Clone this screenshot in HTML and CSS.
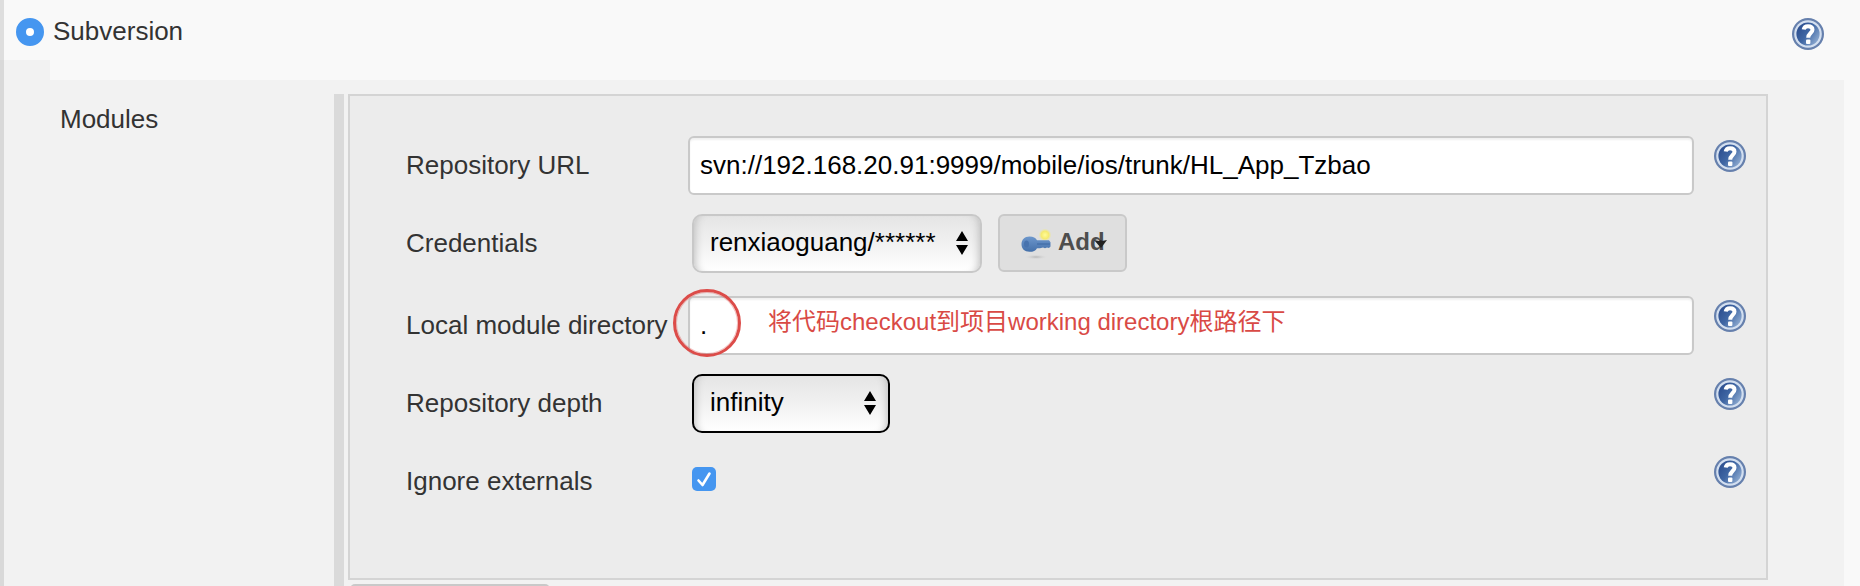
FILE: index.html
```html
<!DOCTYPE html>
<html lang="en">
<head>
<meta charset="utf-8">
<title>Subversion</title>
<link rel="stylesheet" href="styles.css">
</head>
<body>
<svg class="defs" width="0" height="0" aria-hidden="true">
  <defs>
    <linearGradient id="ball" x1="0" y1="0.2" x2="1" y2="0.9"><stop offset="0" stop-color="#2b4d8e"/><stop offset="0.45" stop-color="#4067a4"/><stop offset="1" stop-color="#9bb6d8"/></linearGradient>
    <linearGradient id="keyfill" x1="0" y1="0" x2="0" y2="1"><stop offset="0" stop-color="#6d97cc"/><stop offset="1" stop-color="#4470aa"/></linearGradient>
    <radialGradient id="glow"><stop offset="0" stop-color="#fffb9a"/><stop offset="0.6" stop-color="#f5ea6e"/><stop offset="1" stop-color="#eee9a0" stop-opacity="0"/></radialGradient>
    <radialGradient id="shade"><stop offset="0" stop-color="#b5b5b5"/><stop offset="1" stop-color="#dfdfdf" stop-opacity="0"/></radialGradient>
    <symbol id="help" viewBox="0 0 32 32">
      <circle cx="16" cy="16" r="16" fill="#6680ad"/>
      <circle cx="16" cy="16" r="13.800" fill="#d3dff0"/>
      <circle cx="16" cy="16" r="11.600" fill="url(#ball)"/>
      <path d="M11.700 11.600c.3-2.300 2-3.400 4.300-3.400 2.800 0 4.500 1.300 4.500 3.500 0 3.300-4.300 3.500-4.300 8.100" fill="none" stroke="#fff" stroke-width="4"/>
      <rect x="14" y="21.600" width="4.400" height="4.400" rx="1" fill="#fff"/>
    </symbol>
    <symbol id="updown" viewBox="0 0 12 24"><path d="M6 0l6 10H0zM6 24l6-10H0z"/></symbol>
  </defs>
</svg>
<main class="page">
  <header class="scm">
    <span class="radio"></span>
    <span class="scm-name">Subversion</span>
    <svg class="help scm-help"><use href="#help"/></svg>
  </header>
  <section class="body">
    <div class="section-name">Modules</div>
    <div class="rail"></div>
    <div class="stack">
      <div class="panel">
        <div class="label">Repository URL</div>
        <div class="input">svn://192.168.20.91:9999/mobile/ios/trunk/HL_App_Tzbao</div>
        <svg class="help"><use href="#help"/></svg>

        <div class="label">Credentials</div>
        <div class="controls">
          <div class="select cred">renxiaoguang/******<svg class="updown"><use href="#updown"/></svg></div>
          <div class="add">
            <svg class="key" viewBox="0 0 32 32">
              <ellipse cx="16" cy="28" rx="12" ry="2.500" fill="url(#shade)"/>
              <circle cx="25" cy="6" r="6.500" fill="url(#glow)"/>
              <path d="M9.500 7.500c4 0 6 1.200 7.500 3.800h12l1.500 2v4.200l-1.500 1.500-2-.6-2 .8-2-.8-3 .8h-3c-1.500 2.600-3.500 3.600-7.500 3.600-5 0-8-3-8-7.500s3-7.800 8-7.800z" fill="url(#keyfill)"/>
              <path d="M17 15h13" stroke="#34609b" stroke-width="1.500" opacity="0.500"/>
              <ellipse cx="6.500" cy="15" rx="2.500" ry="3.500" fill="#4873ae"/>
            </svg>
            <b>Add</b>
            <svg class="caret" viewBox="0 0 13 9"><path d="M0 1l5 1 2-1 1 1 5-1-6 8z"/></svg>
          </div>
        </div>
        <i></i>

        <div class="label">Local module directory</div>
        <div class="input local">.<span class="note">将代码checkout到项目working directory根路径下</span><span class="ring"></span></div>
        <svg class="help"><use href="#help"/></svg>

        <div class="label">Repository depth</div>
        <div class="controls"><div class="select depth">infinity<svg class="updown"><use href="#updown"/></svg></div></div>
        <svg class="help"><use href="#help"/></svg>

        <div class="label">Ignore externals</div>
        <div class="controls"><svg class="check" viewBox="0 0 24 24"><rect width="24" height="24" rx="5" fill="#4596f0"/><path d="M6.500 13.500l4 4.500L17.500 6.500" fill="none" stroke="#fff" stroke-width="2.600" stroke-linecap="round" stroke-linejoin="round"/></svg></div>
        <svg class="help"><use href="#help"/></svg>
      </div>
      <div class="next-button"></div>
    </div>
  </section>
</main>
</body>
</html>
```
FILE: styles.css
```css
* { box-sizing: border-box; }
body {
  margin: 0;
  background: #f9f9f9;
  color: #333;
  font: 26px/32px "Liberation Sans", "Noto Sans CJK SC", sans-serif;
}
svg { display: block; flex: none; }
.defs { position: absolute; }
.page {
  height: 586px;
  overflow: hidden;
  display: flex;
  flex-direction: column;
}
.scm {
  flex: none;
  height: 60px;
  display: flex;
  align-items: flex-start;
  padding: 15px 36px 0 12px;
  border-left: 4px solid #dedede;
}
.radio {
  width: 28px;
  height: 28px;
  margin-top: 3px;
  border: 10px solid #4596f0;
  border-radius: 50%;
  background: #fff;
}
.scm-name { margin-left: 9px; }
.help { width: 32px; height: 32px; margin-top: 4px; }
.scm-help { margin: 3px 0 0 auto; }
.body {
  flex: 1;
  display: flex;
  margin-right: 16px;
  padding-top: 34px;
  border-left: 4px solid #d9d9d9;
  background: linear-gradient(#f9f9f9, #f9f9f9) 46px 0 / 100% 20px no-repeat #f2f2f2;
}
.section-name { width: 330px; padding: 9px 0 0 56px; }
.rail { width: 10px; margin-right: 4px; background: #dadada; }
.stack { width: 1420px; }
.panel {
  height: 486px;
  display: grid;
  grid-template-columns: 282px 1006px 32px;
  grid-template-rows: 78px 82px 78px 78px 78px;
  align-items: start;
  padding: 40px 0 0 56px;
  border: 2px solid #d4d4d4;
  background: #ececec;
}
.panel > .help { margin-left: 20px; }
.label { padding-top: 13px; white-space: nowrap; }
.input {
  position: relative;
  height: 59px;
  padding: 11px 10px;
  border: 2px solid #c9c9c9;
  border-radius: 6px;
  background: #fff;
  box-shadow: inset 0 2px 2px #f0f0f0;
  color: #000;
  white-space: nowrap;
}
.note {
  position: absolute;
  left: 78px;
  top: 8px;
  color: #d94a45;
  font-size: 24px;
}
.ring {
  position: absolute;
  left: -17px;
  top: -9px;
  width: 68px;
  height: 68px;
  border: 3px solid #dc4c49;
  border-radius: 50%;
  box-shadow: inset 0 0 0 1px #dc4c4955;
}
.controls { display: flex; padding-left: 4px; gap: 16px; }
.select {
  height: 59px;
  display: flex;
  justify-content: space-between;
  padding: 10px 12px 0 16px;
  border: 2px solid #c8c8c8;
  border-radius: 10px;
  background: linear-gradient(#e5e5e5, #f1f1f1 50%, #fff);
  box-shadow: inset 9px 0 8px -8px #bbb, inset -9px 0 8px -8px #bbb;
  color: #000;
}
.cred { width: 290px; }
.depth { width: 198px; border-color: #000; }
.updown { width: 12px; height: 24px; margin-top: 5px; }
.add {
  position: relative;
  width: 129px;
  height: 58px;
  display: flex;
  padding: 10px 0 0 20px;
  border: 2px solid #c9c9c9;
  border-radius: 6px;
  background: #dfdfdf;
  color: #4d4d4d;
  font-size: 24px;
}
.key { width: 32px; height: 32px; margin: 3px 6px 0 0; }
.caret { position: absolute; left: 94px; top: 23px; width: 13px; height: 9px; fill: #222; }
.check { width: 24px; height: 24px; margin-top: 15px; }
.next-button {
  width: 200px;
  height: 20px;
  margin: 4px 0 0 2px;
  border-radius: 5px;
  background: #c9c9c9;
}
```
